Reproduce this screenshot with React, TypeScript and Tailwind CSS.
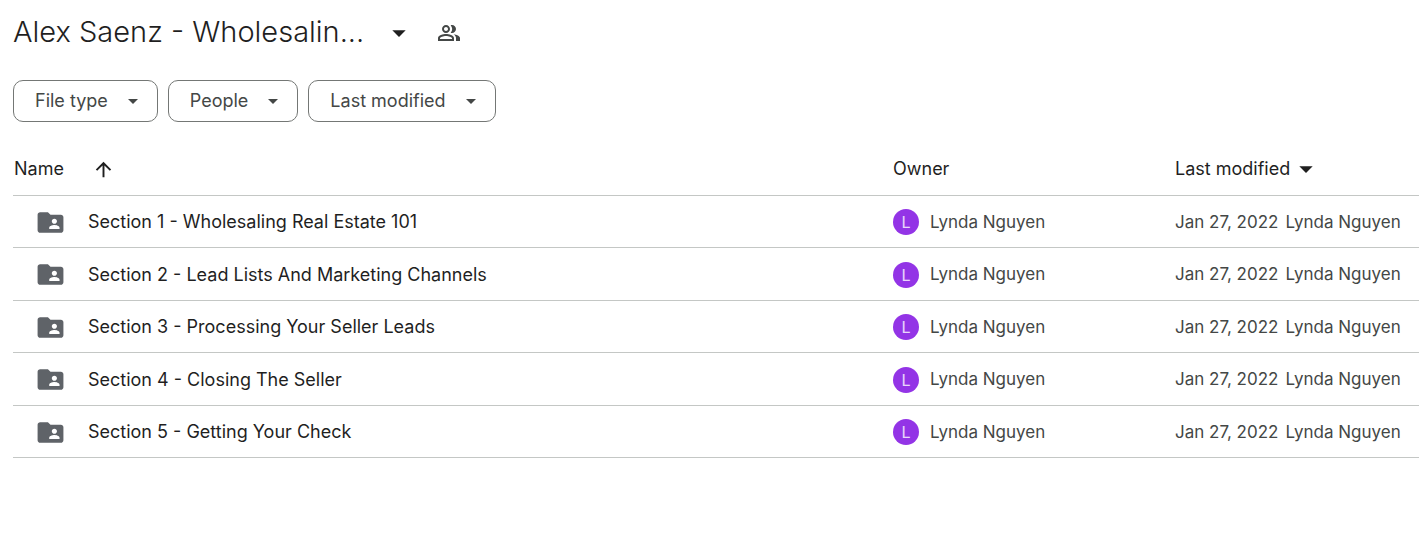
import React from 'react';
import {
  MdArrowDropDown,
  MdArrowUpward,
  MdFolderShared,
  MdOutlinePeopleAlt,
} from 'react-icons/md';

const FILTERS = ['File type', 'People', 'Last modified'];

const FOLDERS = [
  'Section 1 - Wholesaling Real Estate 101',
  'Section 2 - Lead Lists And Marketing Channels',
  'Section 3 - Processing Your Seller Leads',
  'Section 4 - Closing The Seller',
  'Section 5 - Getting Your Check',
].map((name) => ({ name, owner: 'Lynda Nguyen', modified: 'Jan 27, 2022' }));

const Header: React.FC = () => (
  <header className="flex h-16 items-center">
    <h1 className="text-[29px] leading-10 font-light whitespace-nowrap">
      Alex Saenz - Wholesalin...
    </h1>
    <button aria-label="Folder actions" className="ml-[19px] pt-0.5">
      <MdArrowDropDown size={32} />
    </button>
    <button aria-label="Manage access" className="ml-[22px] pt-0.5 text-[#444746]">
      <MdOutlinePeopleAlt size={24} />
    </button>
  </header>
);

const Filters: React.FC = () => (
  <div className="mt-4 flex gap-2.5">
    {FILTERS.map((label) => (
      <button
        key={label}
        className="flex h-[42px] items-center gap-[13px] rounded-[10px] border border-[#747775] pr-3 pl-[21px] text-lg text-[#444746]"
      >
        {label}
        <MdArrowDropDown size={24} />
      </button>
    ))}
  </div>
);

const FileTable: React.FC = () => (
  <table className="mt-5 w-full table-fixed border-collapse text-left text-lg whitespace-nowrap">
    <thead>
      <tr className="h-[53px] border-b border-[#c4c7c5]">
        <th className="pt-0.5 font-normal">
          <button className="flex items-center gap-7 pl-px">
            Name
            <MdArrowUpward size={23} />
          </button>
        </th>
        <th className="w-[282px] pt-0.5 font-normal">Owner</th>
        <th className="w-[244px] pt-0.5 font-normal">
          <button className="flex items-center">
            Last modified
            <MdArrowDropDown size={32} />
          </button>
        </th>
      </tr>
    </thead>
    <tbody>
      {FOLDERS.map((folder) => (
        <tr
          key={folder.name}
          className="border-b border-[#c4c7c5] odd:h-[52px] even:h-[53px]"
        >
          <td className="pt-0.5">
            <div className="flex items-center gap-[22px] pl-[22px]">
              <MdFolderShared size={31} className="shrink-0 text-[#5f6368]" />
              {folder.name}
            </div>
          </td>
          <td className="pt-0.5">
            <div className="flex items-center gap-[11px] text-[17px] text-[#444746]">
              <span className="flex size-[26px] items-center justify-center rounded-full bg-[#9334e6] text-base text-white/80">
                {folder.owner[0]}
              </span>
              {folder.owner}
            </div>
          </td>
          <td className="pt-0.5 text-[17px] text-[#444746]">
            <div className="flex gap-[7px]">
              <span>{folder.modified}</span>
              <span>{folder.owner}</span>
            </div>
          </td>
        </tr>
      ))}
    </tbody>
  </table>
);

export default function App() {
  return (
    <main className="min-h-screen bg-white pl-[13px] font-['Inter',sans-serif] text-[#1f1f1f]">
      <Header />
      <Filters />
      <FileTable />
    </main>
  );
}
